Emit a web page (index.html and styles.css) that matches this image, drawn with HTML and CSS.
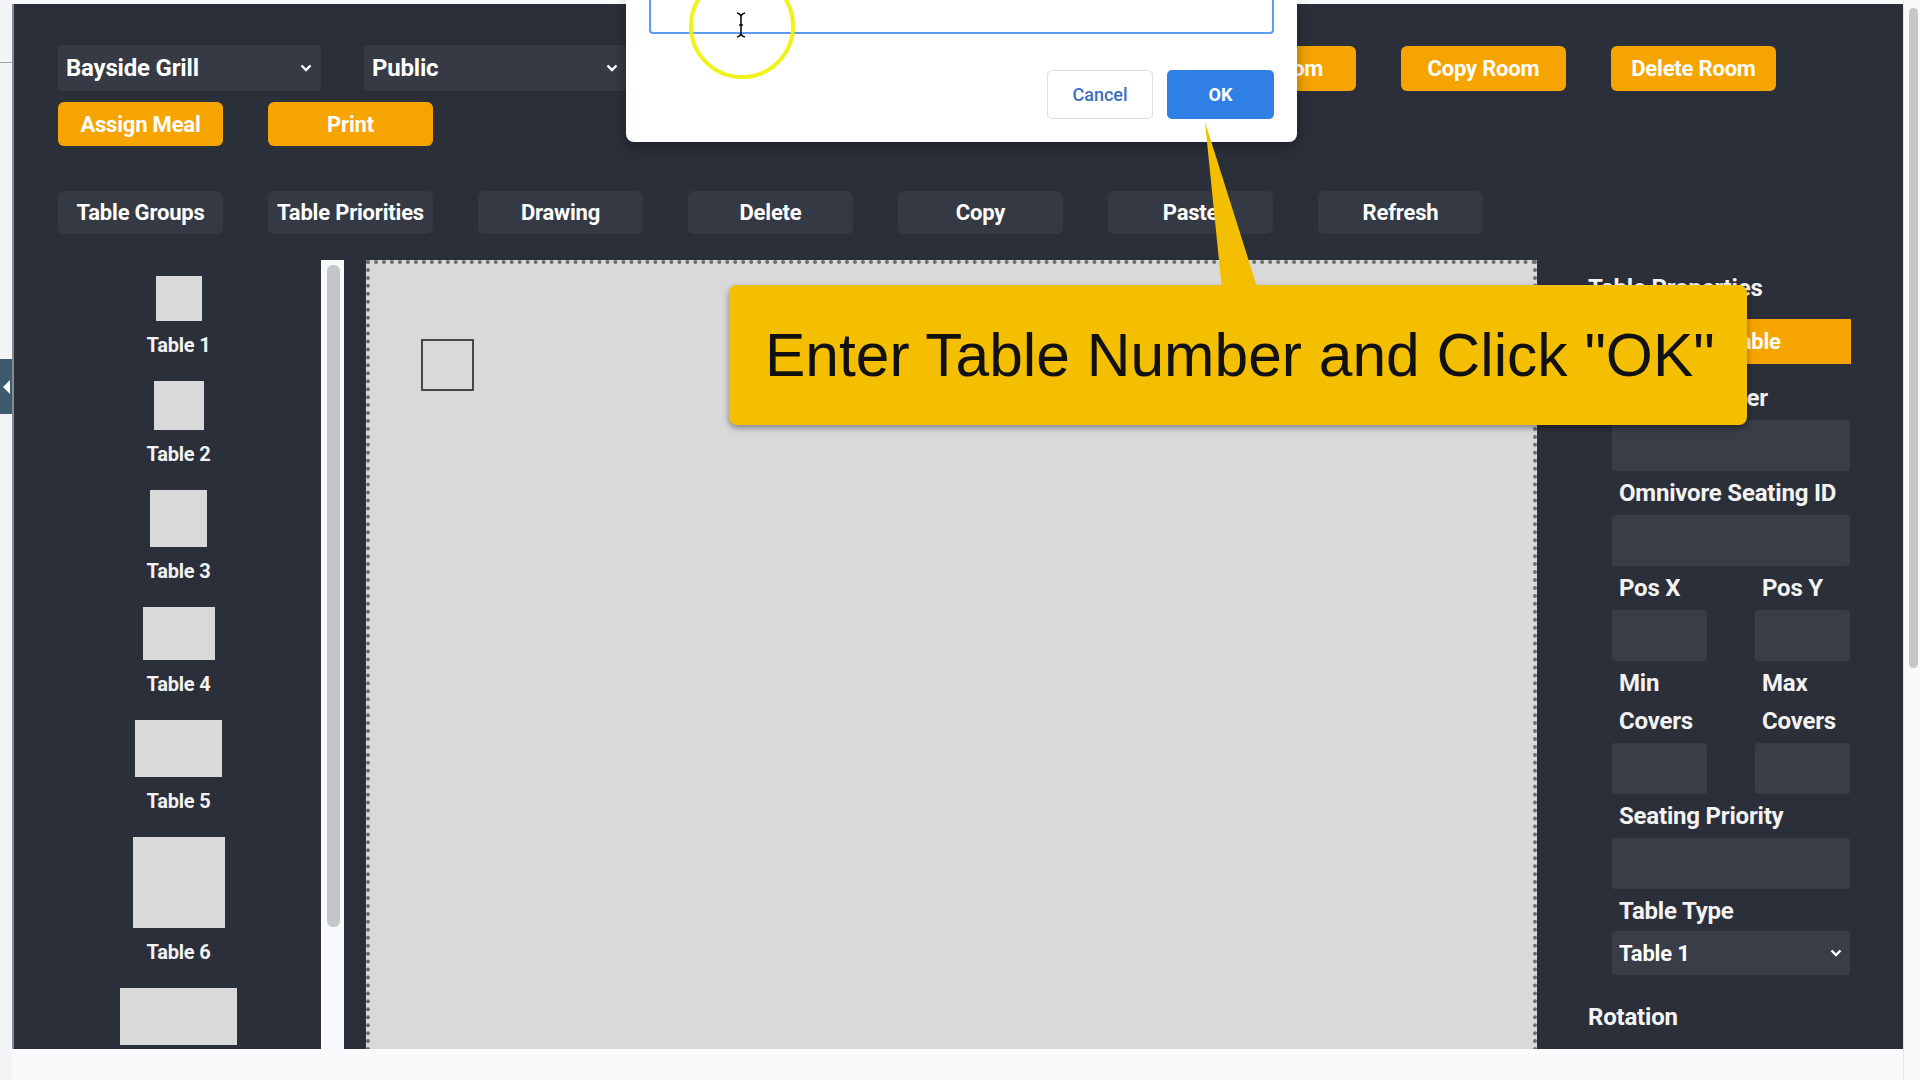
FILE: index.html
```html
<!DOCTYPE html>
<html lang="en">
<head>
    <meta charset="UTF-8">
    <meta name="viewport" content="width=device-width, initial-scale=1.0">
    <title>Room Layout</title>
    <link rel="stylesheet" href="styles.css">
</head>
<body>
<div class="page">
    <div class="gutter">
        <div class="gutter-line"></div>
        <div class="gutter-tab"></div>
    </div>

    <div class="app">
        <div class="header">
            <div class="row row-top">
                <div class="select">
                    <span>Bayside Grill</span>
                    <svg class="chev" width="12" height="8" viewBox="0 0 12 8"><polyline points="1.5,1.5 6,6 10.5,1.5" fill="none" stroke="#fff" stroke-width="2.4"/></svg>
                </div>
                <div class="select">
                    <span>Public</span>
                    <svg class="chev" width="12" height="8" viewBox="0 0 12 8"><polyline points="1.5,1.5 6,6 10.5,1.5" fill="none" stroke="#fff" stroke-width="2.4"/></svg>
                </div>
                <div class="room-actions">
                    <div class="btn-orange">Add Room</div>
                    <div class="btn-orange">Edit Room</div>
                    <div class="btn-orange">Copy Room</div>
                    <div class="btn-orange">Delete Room</div>
                </div>
            </div>
            <div class="row row-second">
                <div class="btn-orange">Assign Meal</div>
                <div class="btn-orange">Print</div>
            </div>
            <div class="row toolbar">
                <div class="btn-dark">Table Groups</div>
                <div class="btn-dark">Table Priorities</div>
                <div class="btn-dark">Drawing</div>
                <div class="btn-dark">Delete</div>
                <div class="btn-dark">Copy</div>
                <div class="btn-dark">Paste</div>
                <div class="btn-dark">Refresh</div>
            </div>
        </div>

        <div class="main">
            <div class="palette">
                <div class="table-item">
                    <div class="table-shape" style="width:46px;height:45px"></div>
                    <div class="table-label">Table 1</div>
                </div>
                <div class="table-item">
                    <div class="table-shape" style="width:50px;height:49px"></div>
                    <div class="table-label">Table 2</div>
                </div>
                <div class="table-item">
                    <div class="table-shape" style="width:57px;height:57px"></div>
                    <div class="table-label">Table 3</div>
                </div>
                <div class="table-item">
                    <div class="table-shape" style="width:72px;height:53px"></div>
                    <div class="table-label">Table 4</div>
                </div>
                <div class="table-item">
                    <div class="table-shape" style="width:87px;height:57px"></div>
                    <div class="table-label">Table 5</div>
                </div>
                <div class="table-item">
                    <div class="table-shape" style="width:92px;height:91px"></div>
                    <div class="table-label">Table 6</div>
                </div>
                <div class="table-item">
                    <div class="table-shape" style="width:117px;height:57px"></div>
                </div>
            </div>

            <div class="palette-scroll">
                <div class="palette-thumb"></div>
            </div>

            <div class="canvas">
                <div class="canvas-table"></div>
            </div>

            <div class="props">
                <div class="props-title">Table Properties</div>
                <div class="btn-bar">Delete Table</div>
                <div class="fields">
                    <div class="field-label">Table Number</div>
                    <div class="field-input"></div>
                    <div class="field-label">Omnivore Seating ID</div>
                    <div class="field-input"></div>
                    <div class="field-grid">
                        <div class="field-label">Pos X</div>
                        <div class="field-label">Pos Y</div>
                        <div class="field-input"></div>
                        <div class="field-input"></div>
                        <div class="field-label two-line">Min Covers</div>
                        <div class="field-label two-line">Max Covers</div>
                        <div class="field-input"></div>
                        <div class="field-input"></div>
                    </div>
                    <div class="field-label">Seating Priority</div>
                    <div class="field-input"></div>
                    <div class="field-label">Table Type</div>
                    <div class="select select-sm">
                        <span>Table 1</span>
                        <svg class="chev" width="12" height="8" viewBox="0 0 12 8"><polyline points="1.5,1.5 6,6 10.5,1.5" fill="none" stroke="#fff" stroke-width="2.4"/></svg>
                    </div>
                </div>
                <div class="props-title rotation">Rotation</div>
            </div>
        </div>
    </div>

    <div class="vscroll">
        <div class="vscroll-thumb"></div>
    </div>

    <!-- prompt dialog -->
    <div class="dialog">
        <div class="dialog-input"></div>
        <div class="dialog-actions">
            <div class="btn-cancel">Cancel</div>
            <div class="btn-ok">OK</div>
        </div>
    </div>

    <!-- cursor highlight -->
    <svg class="cursor-ring" width="108" height="108" viewBox="0 0 108 108">
        <circle cx="54" cy="54" r="51" fill="none" stroke="#eef200" stroke-width="4" opacity="0.9"/>
        <path d="M49 41 Q53 42 53 45 Q53 42 57 41 M53 45 V61 M49 65 Q53 64 53 61 Q53 64 57 65 M51 53 H55" fill="none" stroke="#111" stroke-width="1.6"/>
    </svg>

    <!-- tutorial callout -->
    <div class="callout">
        <svg class="callout-pointer" width="65" height="170" viewBox="0 0 65 170">
            <polygon points="6,2 23,170 59,170" fill="#f3bf00"/>
        </svg>
        <span>Enter Table Number and Click "OK"</span>
    </div>
</div>
</body>
</html>
```

FILE: styles.css
```css
* {
    margin: 0;
    padding: 0;
    box-sizing: border-box;
}

body {
    width: 1920px;
    height: 1080px;
    overflow: hidden;
    background-color: #f9fafb;
    font-family: Roboto, "Noto Sans", sans-serif;
}

.page {
    position: relative;
    display: flex;
    height: 1080px;
}

/* left edge of the browser / collapsed sidebar */
.gutter {
    width: 12px;
    display: flex;
    flex-direction: column;
    background-color: #f3f4f6;
}

.gutter-line {
    margin-top: 62px;
    height: 1px;
    background-color: #9ea1a6;
}

.gutter-tab {
    margin-top: 296px;
    height: 55px;
    background-color: #3e5a6e;
    display: flex;
    align-items: center;
    justify-content: center;
}

.gutter-tab::before {
    content: "";
    border-right: 7px solid #fff;
    border-top: 7px solid transparent;
    border-bottom: 7px solid transparent;
}

/* main dark panel */
.app {
    width: 1891px;
    height: 1045px;
    margin-top: 4px;
    background-color: #2b2f3a;
    border-left: 2px solid #878a91;
    overflow: hidden;
    color: #f3f3f3;
    font-weight: 700;
    letter-spacing: -0.2px;
}

.vscroll {
    width: 17px;
    background-color: #f8f9fa;
    border-left: 1px solid #e4e5e7;
    padding: 8px 2px 0 5px;
}

.vscroll-thumb {
    height: 660px;
    background-color: #c6c7c9;
    border-radius: 5px;
}

.header {
    padding: 41px 0 0 44px;
}

.row {
    display: flex;
    align-items: center;
    gap: 45px;
}

.row-top {
    gap: 43px;
}

.room-actions {
    display: flex;
    gap: 45px;
    margin-left: 311px;
}

.row-second {
    margin-top: 11px;
}

.toolbar {
    margin-top: 45px;
}

.select {
    width: 263px;
    height: 46px;
    background-color: #363a45;
    border-radius: 3px;
    display: flex;
    align-items: center;
    justify-content: space-between;
    padding: 0 9px 0 8px;
    font-size: 24px;
    color: #fff;
}

.btn-orange {
    width: 165px;
    height: 45px;
    background-color: #f6a400;
    border-radius: 6px;
    display: flex;
    align-items: center;
    justify-content: center;
    color: #fff;
    font-size: 22px;
}

.row-second .btn-orange {
    height: 44px;
}

.btn-dark {
    width: 165px;
    height: 43px;
    background-color: #353944;
    border-radius: 6px;
    display: flex;
    align-items: center;
    justify-content: center;
    color: #fff;
    font-size: 22px;
}

/* editor area */
.main {
    display: flex;
    margin-top: 26px;
    height: 789px;
}

.palette {
    width: 307px;
    padding: 16px 0 0 22px;
    display: flex;
    flex-direction: column;
    align-items: center;
}

.table-item {
    display: flex;
    flex-direction: column;
    align-items: center;
    margin-bottom: 24px;
    flex-shrink: 0;
}

.table-shape {
    background-color: #d9d9da;
}

.table-label {
    margin-top: 12px;
    line-height: 24px;
    font-size: 20px;
    color: #f2f2f2;
}

.palette-scroll {
    width: 23px;
    background-color: #f8f9fa;
    padding: 5px 4px 0 6px;
}

.palette-thumb {
    height: 662px;
    background-color: #c4c5c7;
    border-radius: 6px;
}

.canvas {
    position: relative;
    margin-left: 22px;
    width: 1171px;
    height: 800px;
    background-color: #d9d9d9;
    border: 4px dotted #6e6e6e;
    border-bottom: 0;
}

.canvas-table {
    position: absolute;
    left: 51px;
    top: 75px;
    width: 53px;
    height: 52px;
    border: 2px solid #474747;
}

/* properties column */
.props {
    width: 366px;
    padding: 6px 0 0 51px;
}

.props-title {
    font-size: 24px;
    line-height: 44px;
}

.btn-bar {
    margin: 9px 0 0 3px;
    width: 260px;
    height: 45px;
    background-color: #f6a400;
    display: flex;
    align-items: center;
    justify-content: center;
    color: #fff;
    font-size: 22px;
}

.fields {
    margin: 12px 0 0 24px;
    width: 238px;
}

.field-label {
    font-size: 24px;
    line-height: 44px;
    padding: 0 7px;
}

.field-label.two-line {
    line-height: 38px;
    padding: 3px 7px;
}

.field-input {
    height: 51px;
    background-color: #393d48;
    border-radius: 3px;
}

.field-grid {
    display: grid;
    grid-template-columns: 95px 95px;
    column-gap: 48px;
}

.select-sm {
    width: 238px;
    height: 44px;
    margin-top: -2px;
    background-color: #393d48;
    font-size: 22px;
    padding: 0 8px 0 7px;
}

.rotation {
    margin-top: 20px;
}

/* prompt dialog over the page */
.dialog {
    position: absolute;
    left: 626px;
    top: 0;
    width: 671px;
    height: 142px;
    padding: 0 23px;
    background-color: #fff;
    border-radius: 0 0 8px 8px;
    box-shadow: 0 4px 14px rgba(0, 0, 0, 0.35);
    z-index: 3;
}

.dialog-input {
    margin-top: -16px;
    height: 50px;
    border: 2px solid #5c9bf1;
    border-radius: 4px;
}

.dialog-actions {
    display: flex;
    justify-content: flex-end;
    gap: 14px;
    margin-top: 36px;
}

.btn-cancel,
.btn-ok {
    width: 107px;
    height: 49px;
    border-radius: 5px;
    display: flex;
    align-items: center;
    justify-content: center;
    font-size: 18px;
    font-weight: 500;
}

.btn-cancel {
    width: 106px;
    border: 1px solid #dedfe1;
    color: #3a70c2;
}

.btn-ok {
    background-color: #2f7fe4;
    color: #fff;
    font-weight: 700;
}

.cursor-ring {
    position: absolute;
    left: 688px;
    top: -28px;
    z-index: 4;
}

/* tutorial callout */
.callout {
    position: absolute;
    left: 729px;
    top: 285px;
    width: 1018px;
    height: 140px;
    padding-left: 36px;
    display: flex;
    align-items: center;
    background-color: #f3bf00;
    border-radius: 8px;
    box-shadow: 0 3px 6px rgba(0, 0, 0, 0.4);
    font-family: "Liberation Sans", Arial, sans-serif;
    font-size: 60.5px;
    color: #111;
    z-index: 5;
}

.callout-pointer {
    position: absolute;
    left: 470px;
    top: -165px;
}
```
